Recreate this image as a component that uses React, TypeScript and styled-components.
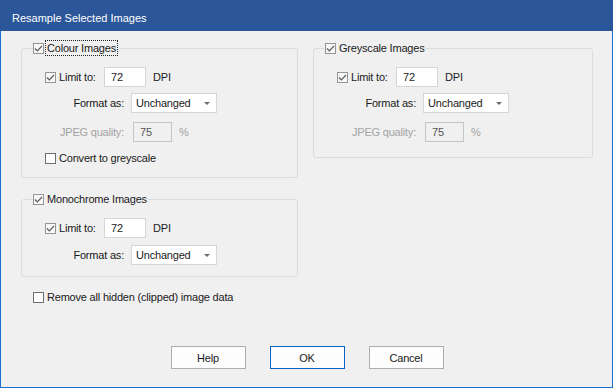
import React from 'react';
import styled, { createGlobalStyle } from 'styled-components';

const Global = createGlobalStyle`
  html, body { margin: 0; padding: 0; background: #f0f0f0; }
  body { font-family: "Liberation Sans", Arial, sans-serif; }
`;

const Window = styled.div`
  width: 613px;
  height: 388px;
  display: flex;
  flex-direction: column;
  background: #f0f0f0;
  font-family: "Liberation Sans", Arial, sans-serif;
  font-size: 11px;
  letter-spacing: -0.2px;
  color: #1a1a1a;
`;

const TitleBar = styled.div`
  height: 31px;
  flex: none;
  box-sizing: border-box;
  background: #2b579a;
  color: #ffffff;
  padding: 11px 0 0 12px;
  font-size: 11px;
  letter-spacing: 0;
  line-height: 14px;
`;

const Frame = styled.div`
  flex: 1;
  display: flex;
  flex-direction: column;
  border: 1px solid #1c6dd0;
  border-top: none;
  padding: 9px 19px 18px 20px;
`;

const Columns = styled.div`
  display: grid;
  grid-template-columns: 277px 280px;
  column-gap: 15px;
  align-items: start;
`;

const Column = styled.div`
  display: flex;
  flex-direction: column;
`;

const Group = styled.fieldset<{ $pb: number; $mt?: number }>`
  margin: ${p => p.$mt ?? 0}px 0 0 0;
  padding: 0 0 ${p => p.$pb}px 0;
  min-width: 0;
  border: 1px solid #dcdcdc;
  border-radius: 3px;
`;

const Legend = styled.legend`
  margin-left: 11px;
  padding: 0 1px 0 0;
  height: 16px;
  display: flex;
  align-items: center;
`;

const Row = styled.div<{ $mt: number; $pl?: number; $h?: number }>`
  display: flex;
  align-items: center;
  height: ${p => p.$h ?? 20}px;
  margin-top: ${p => p.$mt}px;
  padding-left: ${p => p.$pl ?? 0}px;
`;

const BoxEl = styled.span<{ $checked?: boolean }>`
  width: 11px;
  height: 11px;
  box-sizing: border-box;
  flex: none;
  border: 1px solid ${p => (p.$checked ? '#959595' : '#6e6e6e')};
  background: ${p => (p.$checked ? '#f7f7f7' : '#ffffff')};
  display: flex;
  align-items: center;
  justify-content: center;
`;

const CheckText = styled.span<{ $focus?: boolean }>`
  margin-left: ${p => (p.$focus ? 1 : 3)}px;
  padding: ${p => (p.$focus ? '0 1px 0 1px' : '0')};
  border: ${p => (p.$focus ? '1px dotted #222' : 'none')};
  line-height: 14px;
  white-space: nowrap;
`;

const CheckWrap = styled.span<{ $w?: number }>`
  display: flex;
  align-items: center;
  width: ${p => (p.$w ? `${p.$w}px` : 'auto')};
  flex: none;
`;

const FieldLabel = styled.span<{ $disabled?: boolean }>`
  width: 102px;
  flex: none;
  text-align: right;
  white-space: nowrap;
  color: ${p => (p.$disabled ? '#a3a3a3' : '#1a1a1a')};
`;

const NumInput = styled.div<{ $disabled?: boolean; $w: number; $ml?: number }>`
  width: ${p => p.$w}px;
  height: 20px;
  box-sizing: border-box;
  margin-left: ${p => p.$ml ?? 0}px;
  border: 1px solid ${p => (p.$disabled ? '#c4c4c4' : '#d5d5d5')};
  background: ${p => (p.$disabled ? '#f0f0f0' : '#ffffff')};
  color: ${p => (p.$disabled ? '#555' : '#1a1a1a')};
  display: flex;
  align-items: center;
  padding-left: 6px;
  flex: none;
`;

const Unit = styled.span<{ $disabled?: boolean }>`
  margin-left: 7px;
  color: ${p => (p.$disabled ? '#a3a3a3' : '#1a1a1a')};
`;

const Select = styled.div`
  width: 86px;
  height: 20px;
  box-sizing: border-box;
  margin-left: 7px;
  border: 1px solid #d5d5d5;
  background: #ffffff;
  display: flex;
  align-items: center;
  justify-content: space-between;
  padding: 0 6px 0 4px;
  flex: none;
`;

const Arrow = styled.span`
  width: 0;
  height: 0;
  border-left: 3px solid transparent;
  border-right: 3px solid transparent;
  border-top: 3px solid #6a6a6a;
`;

const Footer = styled.div`
  margin-top: auto;
  display: flex;
  justify-content: center;
  gap: 24px;
`;

const Button = styled.div<{ $default?: boolean }>`
  width: 75px;
  height: 23px;
  box-sizing: border-box;
  border: 1px solid ${p => (p.$default ? '#0a64c8' : '#adadad')};
  background: #fdfdfd;
  display: flex;
  align-items: center;
  justify-content: center;
`;

function Checkbox({ checked, label, focus, w }: { checked?: boolean; label: string; focus?: boolean; w?: number }) {
  return (
    <CheckWrap $w={w}>
      <BoxEl $checked={checked}>
        {checked && (
          <svg width="9" height="9" viewBox="0 0 9 9">
            <polyline points="1,4.5 3.3,6.8 8,2" fill="none" stroke="#5a5a5a" strokeWidth="1.2" />
          </svg>
        )}
      </BoxEl>
      <CheckText $focus={focus}>{label}</CheckText>
    </CheckWrap>
  );
}

function LimitRow() {
  return (
    <Row $mt={11} $pl={23}>
      <Checkbox checked label="Limit to:" w={59} />
      <NumInput $w={42}>72</NumInput>
      <Unit>DPI</Unit>
    </Row>
  );
}

function FormatRow({ mt }: { mt: number }) {
  return (
    <Row $mt={mt}>
      <FieldLabel>Format as:</FieldLabel>
      <Select>
        <span>Unchanged</span>
        <Arrow />
      </Select>
    </Row>
  );
}

function JpegRow() {
  return (
    <Row $mt={9}>
      <FieldLabel $disabled>JPEG quality:</FieldLabel>
      <NumInput $disabled $w={39} $ml={9}>75</NumInput>
      <Unit $disabled>%</Unit>
    </Row>
  );
}

export default function App() {
  return (
    <>
      <Global />
      <Window>
        <TitleBar>Resample Selected Images</TitleBar>
        <Frame>
          <Columns>
            <Column>
              <Group $pb={11}>
                <Legend>
                  <Checkbox checked focus label="Colour Images" />
                </Legend>
                <LimitRow />
                <FormatRow mt={6} />
                <JpegRow />
                <Row $mt={8} $pl={23} $h={16}>
                  <Checkbox label="Convert to greyscale" />
                </Row>
              </Group>
              <Group $pb={11} $mt={13}>
                <Legend>
                  <Checkbox checked label="Monochrome Images" />
                </Legend>
                <LimitRow />
                <FormatRow mt={7} />
              </Group>
              <Row $mt={12} $pl={12} $h={16}>
                <Checkbox label="Remove all hidden (clipped) image data" />
              </Row>
            </Column>
            <Column>
              <Group $pb={15}>
                <Legend>
                  <Checkbox checked label="Greyscale Images" />
                </Legend>
                <LimitRow />
                <FormatRow mt={6} />
                <JpegRow />
              </Group>
            </Column>
          </Columns>
          <Footer>
            <Button>Help</Button>
            <Button $default>OK</Button>
            <Button>Cancel</Button>
          </Footer>
        </Frame>
      </Window>
    </>
  );
}
